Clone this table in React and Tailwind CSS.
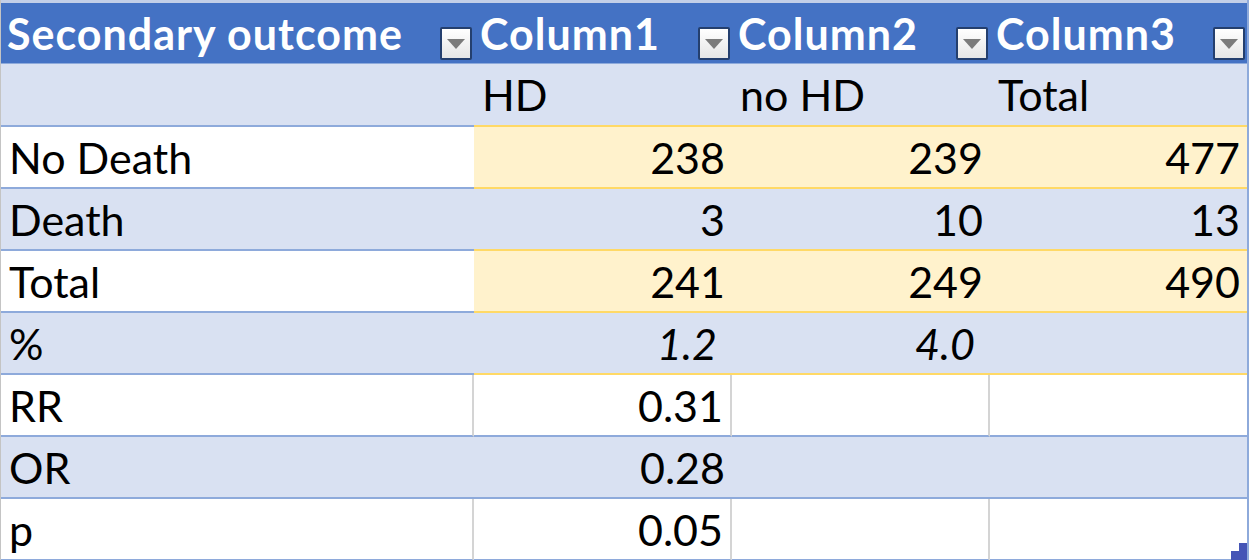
import React from "react";

const W = ["w-[473px]", "w-[258px]", "w-[258px]", "w-[257px]"];

const B = "bg-[#d9e1f2]"; // band
const Y = "bg-[#fff2cc]"; // yellow
const Wh = "bg-white";

const BLUE = "border-[#8eaadb]";
const YEL = "border-[#ffd966]";

function DropBtn() {
  return (
    <div className="self-end mb-[3px] mr-[2px] w-[32px] h-[33px] shrink-0 border-2 border-[#243f6e] rounded-[2px] bg-gradient-to-b from-white to-[#e6e6e6] flex items-center justify-center">
      <svg width="18" height="10" viewBox="0 0 18 10">
        <polygon points="0,0 18,0 9,10" fill="#7b7b7b" />
      </svg>
    </div>
  );
}

const rows = [
  {
    cells: [
      { t: "", bg: B, bc: BLUE },
      { t: "HD", bg: B, bc: YEL, left: true },
      { t: "no HD", bg: B, bc: YEL, left: true },
      { t: "Total", bg: B, bc: YEL, left: true },
    ],
    h: "h-[63px]",
  },
  {
    cells: [
      { t: "No Death", bg: Wh, bc: BLUE, left: true },
      { t: "238", bg: Y, bc: YEL },
      { t: "239", bg: Y, bc: YEL },
      { t: "477", bg: Y, bc: YEL },
    ],
  },
  {
    cells: [
      { t: "Death", bg: B, bc: BLUE, left: true },
      { t: "3", bg: B, bc: YEL },
      { t: "10", bg: B, bc: YEL },
      { t: "13", bg: B, bc: YEL },
    ],
  },
  {
    cells: [
      { t: "Total", bg: Wh, bc: BLUE, left: true },
      { t: "241", bg: Y, bc: YEL },
      { t: "249", bg: Y, bc: YEL },
      { t: "490", bg: Y, bc: YEL },
    ],
  },
  {
    cells: [
      { t: "%", bg: B, bc: BLUE, left: true },
      { t: "1.2", bg: B, bc: YEL, it: true },
      { t: "4.0", bg: B, bc: YEL, it: true },
      { t: "", bg: B, bc: YEL },
    ],
  },
  {
    grid: true,
    cells: [
      { t: "RR", bg: Wh, bc: BLUE, left: true },
      { t: "0.31", bg: Wh, bc: BLUE },
      { t: "", bg: Wh, bc: BLUE },
      { t: "", bg: Wh, bc: BLUE },
    ],
  },
  {
    cells: [
      { t: "OR", bg: B, bc: BLUE, left: true },
      { t: "0.28", bg: B, bc: BLUE },
      { t: "", bg: B, bc: BLUE },
      { t: "", bg: B, bc: BLUE },
    ],
  },
  {
    grid: true,
    cells: [
      { t: "p", bg: Wh, bc: BLUE, left: true },
      { t: "0.05", bg: Wh, bc: BLUE },
      { t: "", bg: Wh, bc: BLUE },
      { t: "", bg: Wh, bc: BLUE },
    ],
  },
];

export default function App() {
  const headers = ["Secondary outcome", "Column1", "Column2", "Column3"];
  return (
    <div
      className="relative w-[1249px] h-[560px] overflow-hidden bg-white text-black"
      style={{ fontFamily: "Lato, 'Open Sans', sans-serif" }}
    >
      <div className="flex flex-col border-l border-l-[#c4c4c4] border-r-2 border-r-[#8eaadb]">
        <div className="h-[3px] bg-[#c3cfe8]" />
        <div className="flex h-[60px] bg-[#4472c4]">
          {headers.map((h, i) => (
            <div key={i} className={`${W[i]} flex justify-between h-full`}>
              <span className="self-center pl-[6px] text-[43px] font-bold tracking-[1px] text-white leading-none whitespace-nowrap">
                {h}
              </span>
              <DropBtn />
            </div>
          ))}
        </div>
        <div className="h-px bg-[#8eaadb]" />
        {rows.map((r, ri) => (
          <div key={ri} className="flex">
            {r.cells.map((c, ci) => (
              <div
                key={ci}
                className={`${W[ci]} ${r.h || "h-[62px]"} ${c.bg} border-b-2 ${c.bc} ${
                  r.grid && ci < 3 ? "border-r-2 border-r-[#d4d4d4]" : ""
                } flex items-center ${c.left ? "justify-start pl-[8px]" : "justify-end pr-[7px]"}`}
              >
                <span
                  className={`text-[43px] leading-none whitespace-nowrap ${c.it ? "italic mr-[8px]" : ""}`}
                >
                  {c.t}
                </span>
              </div>
            ))}
          </div>
        ))}
      </div>
      <div className="absolute left-[1231px] top-[551px] w-[16px] h-[9px] bg-[#4555b6]" />
      <div className="absolute left-[1239px] top-[543px] w-[8px] h-[8px] bg-[#4555b6]" />
    </div>
  );
}
